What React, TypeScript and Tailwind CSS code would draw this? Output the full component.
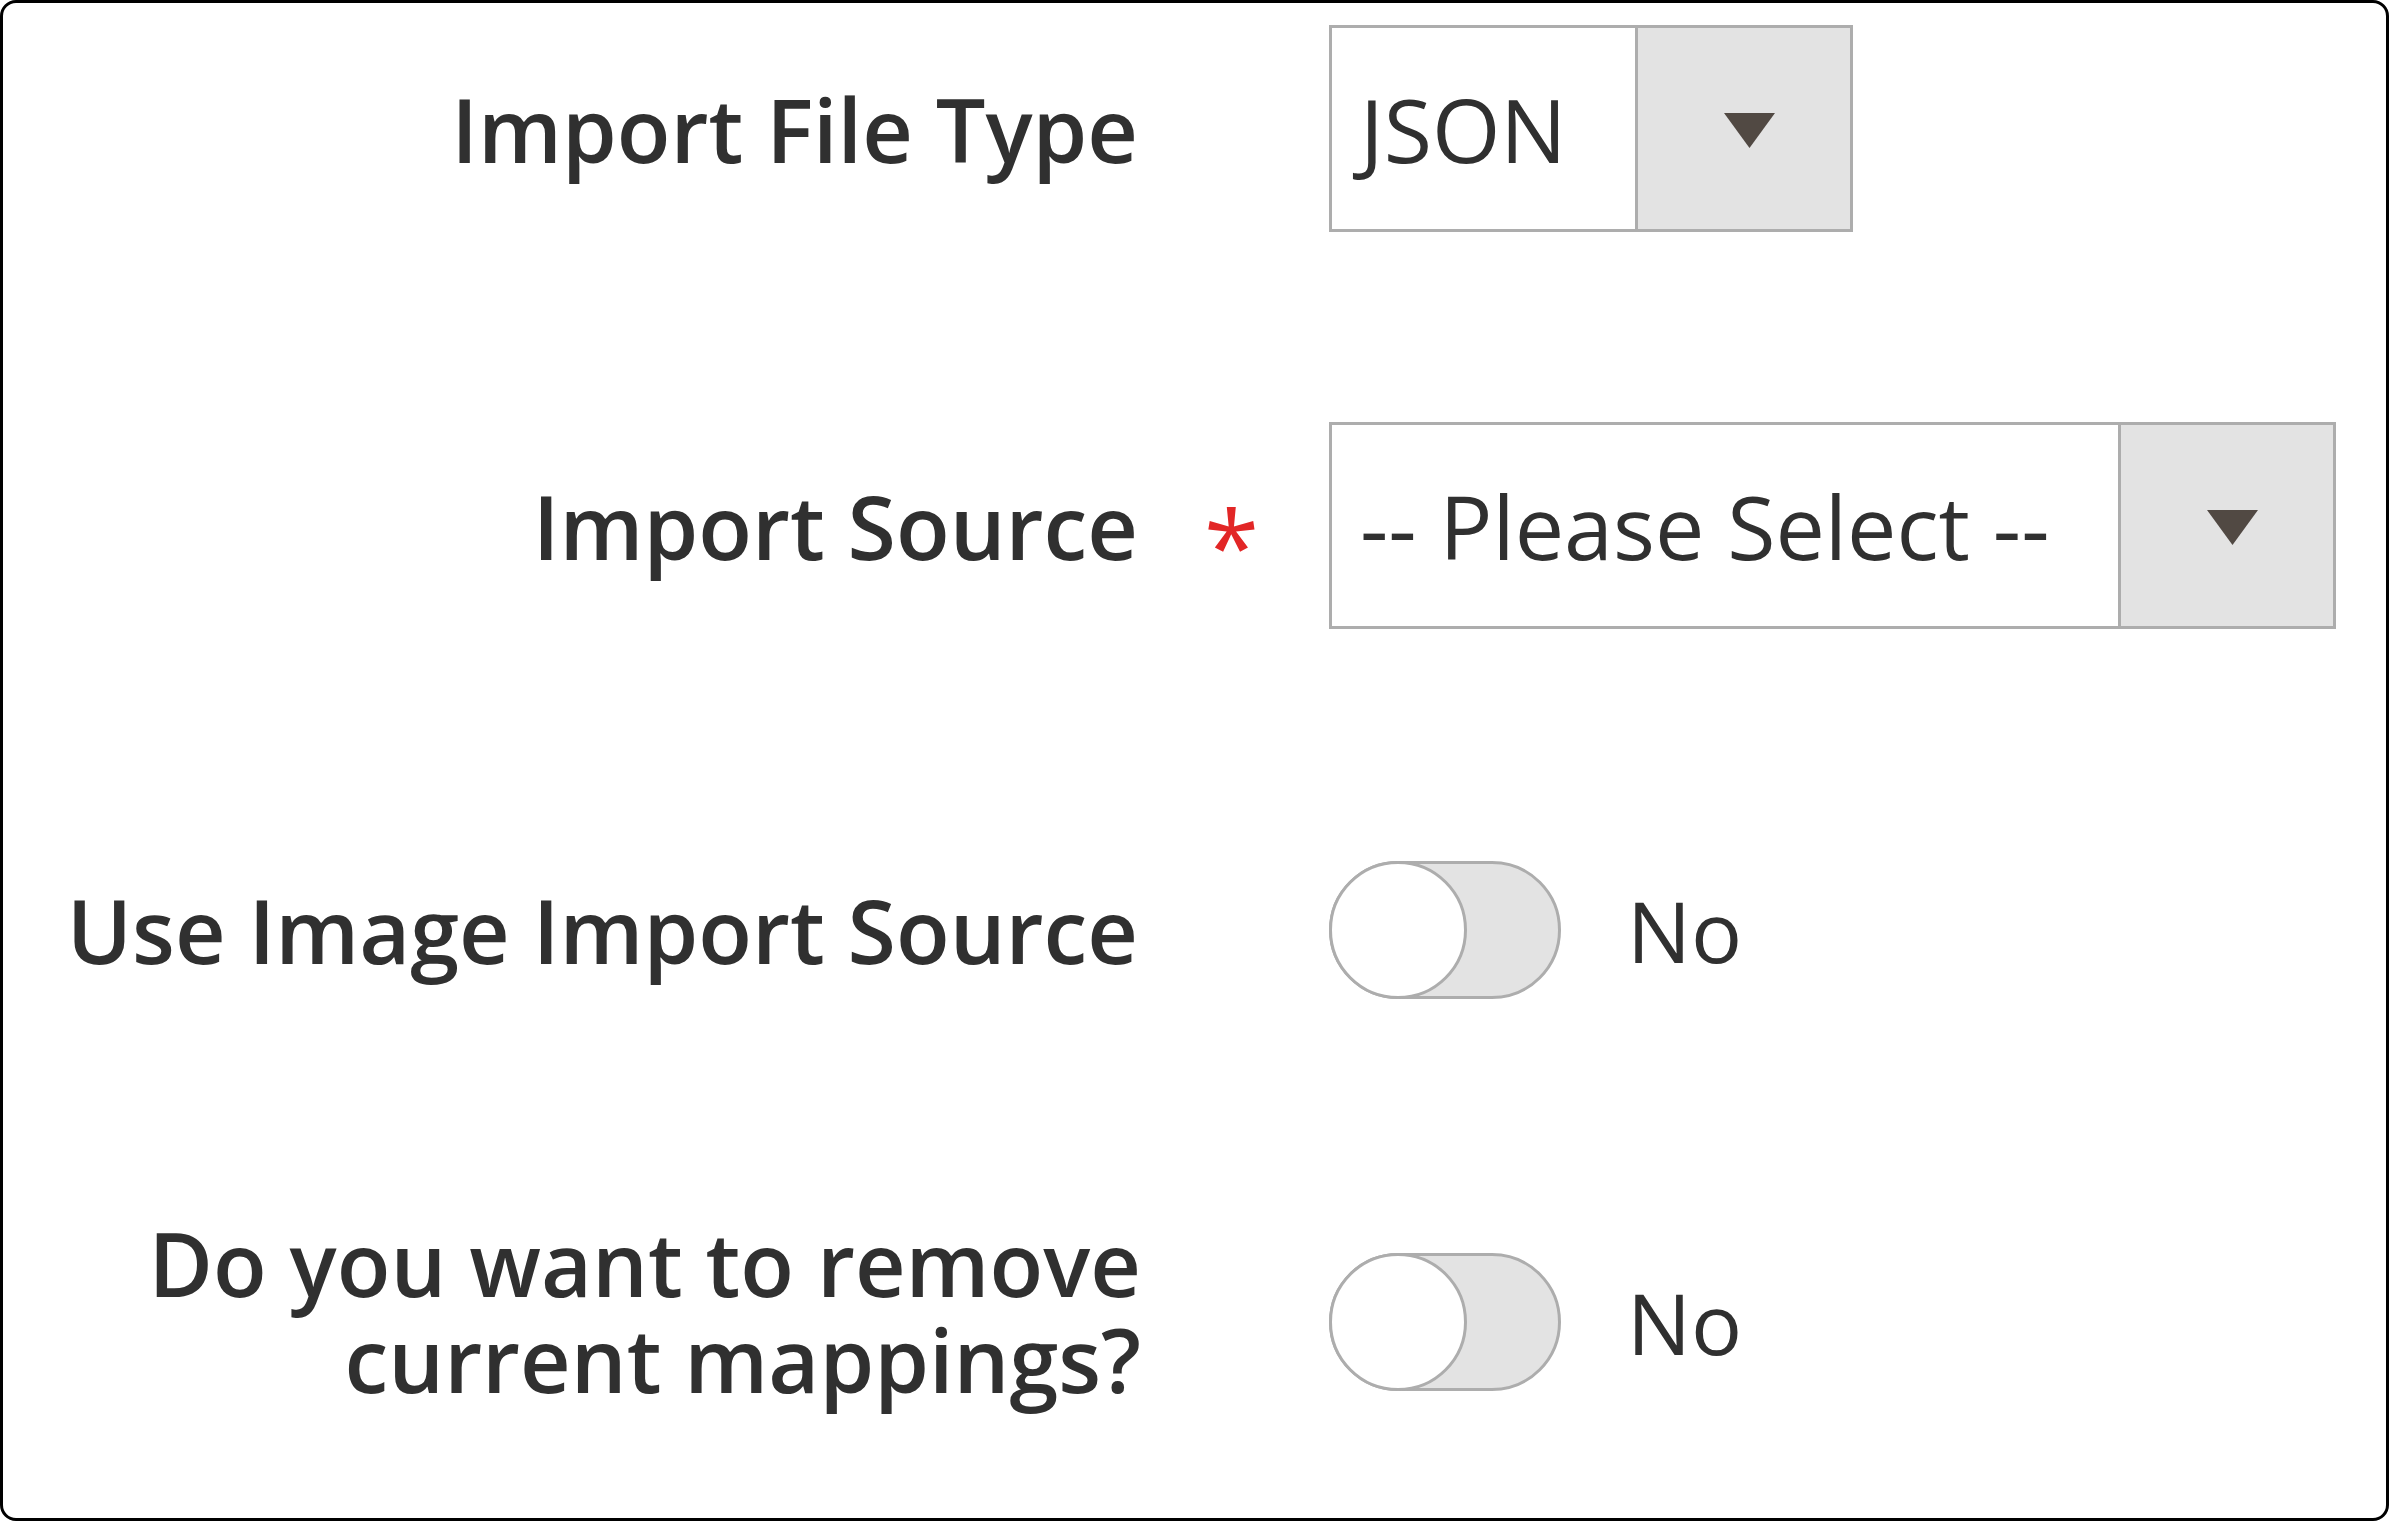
import React from 'react';

// Dropdown with a grey arrow button on the right
const Select = ({ value, width }: { value: string; width: string }) => (
  <div className={`flex h-[207px] ${width} border-[3px] border-[#adadad] bg-white`}>
    <div className="flex flex-1 items-center pl-[28px] text-[88px] leading-none text-[#303030]">
      {value}
    </div>
    <div className="flex w-[215px] items-center justify-center border-l-[3px] border-[#adadad] bg-[#e3e3e3]">
      <svg width="51" height="35" viewBox="0 0 51 35" className="ml-[10px] mt-[4px]">
        <polygon points="0,0 51,0 25.5,35" fill="#514943" />
      </svg>
    </div>
  </div>
);

// Switch in its "off" state, with the No caption
const Toggle = () => (
  <div className="flex items-center">
    <div className="relative h-[138px] w-[232px] rounded-full border-[3px] border-[#adadad] bg-[#e3e3e3]">
      <div className="absolute left-[-3px] top-[-3px] h-[138px] w-[138px] rounded-full border-[3px] border-[#adadad] bg-white" />
    </div>
    <span className="ml-[66px] text-[85px] leading-none text-[#303030]">No</span>
  </div>
);

export default function App() {
  return (
    <div
      className="h-[1521px] w-[2389px] overflow-hidden rounded-[16px] border-[3px] border-black bg-white"
      style={{ fontFamily: '"Open Sans", "Noto Sans", sans-serif' }}
    >
      <div className="flex flex-col pt-[22px]">
        {/* Import File Type */}
        <div className="flex items-center">
          <div className="w-[1135px] text-right text-[88px] font-semibold leading-none text-[#303030]">
            Import File Type
          </div>
          <div className="w-[191px]" />
          <Select value="JSON" width="w-[524px]" />
        </div>

        {/* Import Source */}
        <div className="mt-[190px] flex items-center">
          <div className="w-[1135px] text-right text-[88px] font-semibold leading-none text-[#303030]">
            Import Source
          </div>
          <div className="flex w-[191px] justify-center pr-[4px] pt-[38px] text-[100px] leading-none text-[#e22626]">
            *
          </div>
          <Select value="-- Please Select --" width="w-[1007px]" />
        </div>

        {/* Use Image Import Source */}
        <div className="mt-[232px] flex items-center">
          <div className="w-[1135px] text-right text-[88px] font-semibold leading-none text-[#303030]">
            Use Image Import Source
          </div>
          <div className="w-[191px]" />
          <Toggle />
        </div>

        {/* Remove current mappings */}
        <div className="mt-[216px] flex items-center">
          <div className="w-[1138px] pb-[22px] text-right text-[88px] font-semibold leading-[96px] text-[#303030]">
            Do you want to remove
            <br />
            current mappings?
          </div>
          <div className="w-[188px]" />
          <Toggle />
        </div>
      </div>
    </div>
  );
}
